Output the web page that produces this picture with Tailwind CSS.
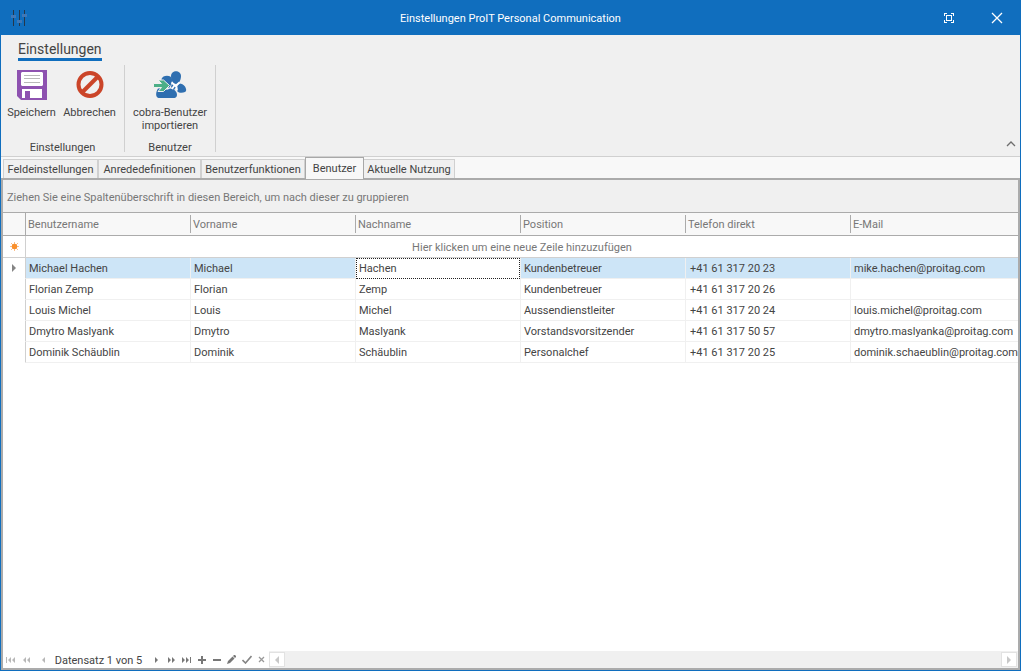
<!DOCTYPE html>
<html lang="de">
<head>
<meta charset="utf-8">
<title>Einstellungen ProIT Personal Communication</title>
<script src="https://cdn.jsdelivr.net/npm/@tailwindcss/browser@4"></script>
</head>
<body class="flex h-screen flex-col overflow-hidden border border-t-0 border-[#106ebe] bg-white font-['Roboto','DejaVu_Sans_Condensed',sans-serif] text-[11px] leading-[13px] text-[#444444]">
  <header class="grid h-[35px] shrink-0 grid-cols-[1fr_auto_1fr] items-center bg-[#106ebe] text-white">
    <svg class="ml-[10px] h-[18px] w-[17px]" viewBox="0 0 17 18" aria-hidden="true">
      <path d="M2.500 1v16M8.500 1v16M13.500 1v16" stroke="#26374a" stroke-width="1" fill="none"/>
      <path d="M0 6h5v3H0zM6 11h5v3H6zM11 5h5v3h-5z" fill="#3f78b8"/>
    </svg>
    <h1 class="pt-px">Einstellungen ProIT Personal Communication</h1>
    <div class="flex items-center justify-end gap-9 pr-[17px]">
      <button type="button" aria-label="Vollbild" class="flex">
        <svg class="h-3 w-3" viewBox="0 0 12 12" fill="none" stroke="#ffffff" shape-rendering="crispEdges"><path d="M1.500 4V1.500H4M8 1.500h2.500V4M10.500 8v2.500H8M4 10.500H1.500V8M3.500 3.500h5v5h-5z"/></svg>
      </button>
      <button type="button" aria-label="Schliessen" class="flex">
        <svg class="h-3 w-3" viewBox="0 0 12 12" fill="none" stroke="#ffffff" stroke-width="1.300"><path d="M1 1l10 10M11 1L1 11"/></svg>
      </button>
    </div>
  </header>

  <section class="shrink-0 border-b border-[#d0d0d0] bg-[#f0f0f0]" aria-label="Menüband">
    <div class="flex h-[30px] items-start pt-[6px] pl-[17px]">
      <button type="button" class="border-b-[3px] border-[#106ebe] text-[14px] leading-[17px]">Einstellungen</button>
    </div>
    <div class="flex h-[91px] items-start">
      <div class="flex h-[87px] w-[124px] flex-col justify-between border-r border-[#d0d0d0]">
        <div class="flex">
          <button type="button" class="flex w-[61px] flex-col items-center gap-[6px] pt-[5px]">
            <svg class="h-[30px] w-[30px]" viewBox="0 0 30 30" aria-hidden="true">
              <path d="M0 0h30v30H4l-4-4z" fill="#8e52b0"/>
              <path d="M5 2h20l1 1v12l-1 1H5l-1-1V3zM5 19h20v9H5z" fill="#ffffff"/>
              <path d="M7 5.500h16M7 8.500h16M7 12.500h16" stroke="#b9b9b9"/>
              <path d="M8 21h5v7H8z" fill="#8e52b0"/>
            </svg>
            <span>Speichern</span>
          </button>
          <button type="button" class="flex w-[55px] flex-col items-center gap-[6px] pt-[5px]">
            <svg class="h-[30px] w-[30px]" viewBox="0 0 30 30" fill="none" stroke="#cb4529" stroke-width="4" aria-hidden="true"><circle cx="15" cy="14.500" r="11.500"/><path d="M23 6.500L7 22.500"/></svg>
            <span>Abbrechen</span>
          </button>
        </div>
        <p class="text-center leading-[9px]">Einstellungen</p>
      </div>
      <div class="flex h-[87px] w-[91px] flex-col justify-between border-r border-[#d0d0d0]">
        <button type="button" class="flex flex-col items-center gap-[6px] pt-[5px]">
          <svg class="h-[30px] w-[34px]" viewBox="0 0 34 30" aria-hidden="true">
            <g fill="#2f6fb0">
              <path d="M18 6c0-6.500 10-6.500 10 0 0 3-1 5-2.500 7-1.500 1.500-3.500 1-5 0C18.500 11 18 9 18 6z"/>
              <path d="M26.500 13.500c2 0 4 1 5.500 3 1 2 2 4 0 5.500-2 1-6 1.500-8-1-1-2.500 0-6 2.500-7.500z"/>
              <path d="M8.500 9c1-4.500 10-4.500 10.500 0 .3 3-1 6-2.500 8.500h-6C9 15 8 12 8.500 9z"/>
              <path d="M5 18.500h6c2 1.500 4 1.500 6 0 3 0 5 1.500 6.500 4 1 2.500.5 5-2 5.500h-16c-3-.5-3-6-.5-9.500z"/>
              <path d="M19 13l4 4-2 3-3-3z"/>
            </g>
            <path d="M18.500 12.500l4 3.500 4-3.500M21 16l-2 3M23.500 16.500l.5 4" fill="none" stroke="#ffffff" stroke-width="1.800"/>
            <path d="M.5 13.500h8L5 10h5.500l6 5.500-6 6H5l3.500-4h-8z" fill="#4caf87" stroke="#f0f0f0" stroke-width="1"/>
          </svg>
          <span>cobra-Benutzer<br>importieren</span>
        </button>
        <p class="text-center leading-[9px]">Benutzer</p>
      </div>
      <button type="button" aria-label="Menüband minimieren" class="mr-1 mb-[9px] ml-auto self-end">
        <svg class="h-[7px] w-[10px]" viewBox="0 0 10 7" fill="none" stroke="#6e6e6e" stroke-width="1.300"><path d="M1 6l4-4 4 4"/></svg>
      </button>
    </div>
  </section>

  <nav class="flex h-[21px] shrink-0 items-end bg-[#f8f8f8] pl-[2px]" role="tablist">
    <button type="button" role="tab" class="h-[19px] w-[95px] border border-b-0 border-[#d0d0d0] bg-[#f0f0f0]">Feldeinstellungen</button>
    <button type="button" role="tab" class="h-[19px] w-[103px] border border-b-0 border-[#d0d0d0] bg-[#f0f0f0]">Anrededefinitionen</button>
    <button type="button" role="tab" class="h-[19px] w-[104px] border border-b-0 border-[#d0d0d0] bg-[#f0f0f0]">Benutzerfunktionen</button>
    <button type="button" role="tab" aria-selected="true" class="z-10 -mb-px h-[22px] w-[59px] border border-b-0 border-[#a8a8a8] bg-[#f8f8f8]">Benutzer</button>
    <button type="button" role="tab" class="h-[19px] w-[91px] border border-b-0 border-l-0 border-[#d0d0d0] bg-[#f0f0f0]">Aktuelle Nutzung</button>
  </nav>

  <main class="flex min-h-0 flex-1 flex-col border-2 border-[#ababab]">
    <p class="flex h-8 shrink-0 items-center bg-[#f0f0f0] pt-[2px] pl-1 text-[#777777]">Ziehen Sie eine Spaltenüberschrift in diesen Bereich, um nach dieser zu gruppieren</p>
    <div class="min-h-0 flex-1 overflow-hidden">
      <table class="w-full table-fixed border-separate border-spacing-0 text-left whitespace-nowrap">
        <colgroup><col class="w-[23px]"><col class="w-[165px]"><col class="w-[165px]"><col class="w-[165px]"><col class="w-[165px]"><col class="w-[165px]"><col></colgroup>
        <thead>
          <tr class="h-6 bg-[#f8f8f8] text-[#777777] [&>th]:border-y [&>th]:border-[#ababab] [&>th]:p-0 [&>th]:font-normal">
            <th class="border-r" aria-label="Zeilenstatus"></th>
            <th><div class="flex h-[18px] items-center border-r border-[#ababab] pl-[2px]">Benutzername</div></th>
            <th><div class="flex h-[18px] items-center border-r border-[#ababab] pl-[2px]">Vorname</div></th>
            <th><div class="flex h-[18px] items-center border-r border-[#ababab] pl-[2px]">Nachname</div></th>
            <th><div class="flex h-[18px] items-center border-r border-[#ababab] pl-[2px]">Position</div></th>
            <th><div class="flex h-[18px] items-center border-r border-[#ababab] pl-[2px]">Telefon direkt</div></th>
            <th><div class="flex h-[18px] items-center pl-[2px]">E-Mail</div></th>
          </tr>
        </thead>
        <tbody class="[&_td]:border-b [&_td]:p-0">
          <tr class="h-[22px]">
            <td class="border-r border-[#d0d0d0]">
              <svg class="mx-auto h-[9px] w-[9px]" viewBox="0 0 9 9" aria-label="Neue Zeile"><path d="M4.500 0v9M0 4.500h9M1 1l7 7M8 1L1 8" stroke="#fbc08a" stroke-width="1"/><circle cx="4.500" cy="4.500" r="2.700" fill="#f9902c"/></svg>
            </td>
            <td colspan="6" class="border-[#d0d0d0] pt-px! text-center text-[#777777]">Hier klicken um eine neue Zeile hinzuzufügen</td>
          </tr>
          <tr class="h-[21px] bg-[#cde5f7] [&>td]:border-[#f0f0f0] [&>td]:pl-[3px] [&>td:not(:last-child)]:border-r">
            <td class="border-r-[#d0d0d0]! border-b-white! bg-white pl-0!"><svg class="mx-auto h-2 w-1" viewBox="0 0 4 8" aria-label="Aktuelle Zeile"><path d="M0 0l4 4-4 4z" fill="#858585"/></svg></td>
            <td>Michael Hachen</td><td>Michael</td>
            <td class="border-b-0! bg-white pl-0!"><div class="flex h-[21px] items-center border border-dotted border-[#222222] pl-[2px]">Hachen</div></td>
            <td>Kundenbetreuer</td><td class="pl-1!">+41 61 317 20 23</td><td>mike.hachen@proitag.com</td>
          </tr>
          <tr class="h-[21px] [&>td]:border-[#f0f0f0] [&>td]:pl-[3px] [&>td:not(:last-child)]:border-r">
            <td class="border-r-[#d0d0d0]! border-b-white!"></td><td>Florian Zemp</td><td>Florian</td><td>Zemp</td><td>Kundenbetreuer</td><td class="pl-1!">+41 61 317 20 26</td><td></td>
          </tr>
          <tr class="h-[21px] [&>td]:border-[#f0f0f0] [&>td]:pl-[3px] [&>td:not(:last-child)]:border-r">
            <td class="border-r-[#d0d0d0]! border-b-white!"></td><td>Louis Michel</td><td>Louis</td><td>Michel</td><td>Aussendienstleiter</td><td class="pl-1!">+41 61 317 20 24</td><td>louis.michel@proitag.com</td>
          </tr>
          <tr class="h-[21px] [&>td]:border-[#f0f0f0] [&>td]:pl-[3px] [&>td:not(:last-child)]:border-r">
            <td class="border-r-[#d0d0d0]! border-b-white!"></td><td>Dmytro Maslyank</td><td>Dmytro</td><td>Maslyank</td><td>Vorstandsvorsitzender</td><td class="pl-1!">+41 61 317 50 57</td><td>dmytro.maslyanka@proitag.com</td>
          </tr>
          <tr class="h-[21px] [&>td]:border-[#f0f0f0] [&>td]:pl-[3px] [&>td:not(:last-child)]:border-r">
            <td class="border-r-[#d0d0d0]! border-b-white!"></td><td>Dominik Schäublin</td><td>Dominik</td><td>Schäublin</td><td>Personalchef</td><td class="pl-1!">+41 61 317 20 25</td><td>dominik.schaeublin@proitag.com</td>
          </tr>
        </tbody>
      </table>
    </div>

    <footer class="flex h-[17px] shrink-0 items-stretch">
      <div class="flex w-[266px] shrink-0 items-center [&>button]:flex [&>button]:w-[15px] [&>button]:justify-center">
        <button type="button" aria-label="Erster Datensatz"><svg class="h-2 w-[10px]" viewBox="0 0 10 8" fill="#b8b8b8"><path d="M0 1h1v6H0zM5 1v6L2 4zM9 1v6L6 4z"/></svg></button>
        <button type="button" aria-label="Vorherige Seite"><svg class="h-2 w-2" viewBox="0 0 8 8" fill="#b8b8b8"><path d="M4 1v6L1 4zM8 1v6L5 4z"/></svg></button>
        <button type="button" aria-label="Vorheriger Datensatz"><svg class="ml-1 h-2 w-1" viewBox="0 0 4 8" fill="#b8b8b8"><path d="M4 1v6L1 4z"/></svg></button>
        <span class="w-[101px] pt-px text-center">Datensatz 1 von 5</span>
        <button type="button" aria-label="Nächster Datensatz"><svg class="h-2 w-1" viewBox="0 0 4 8" fill="#777777"><path d="M0 1v6l3-3z"/></svg></button>
        <button type="button" aria-label="Nächste Seite"><svg class="h-2 w-2" viewBox="0 0 8 8" fill="#777777"><path d="M0 1v6l3-3zM4 1v6l3-3z"/></svg></button>
        <button type="button" aria-label="Letzter Datensatz"><svg class="h-2 w-[10px]" viewBox="0 0 10 8" fill="#777777"><path d="M0 1v6l3-3zM4 1v6l3-3zM8 1h1v6H8z"/></svg></button>
        <button type="button" aria-label="Hinzufügen"><svg class="h-2 w-2" viewBox="0 0 8 8" fill="#777777"><path d="M3 0h2v3h3v2H5v3H3V5H0V3h3z"/></svg></button>
        <button type="button" aria-label="Löschen"><svg class="h-2 w-2" viewBox="0 0 8 8" fill="#777777"><path d="M0 3h8v2H0z"/></svg></button>
        <button type="button" aria-label="Bearbeiten"><svg class="h-[9px] w-[9px]" viewBox="0 0 9 9" fill="#777777"><path d="M0 9l1-3 4.500-4.500 2 2L3 8zM6 1l1-1h1l1 1v1L8 3z"/></svg></button>
        <button type="button" aria-label="Bestätigen"><svg class="h-[9px] w-[10px]" viewBox="0 0 10 9" fill="none" stroke="#858585" stroke-width="1.600"><path d="M0.500 5l3 3 6-7"/></svg></button>
        <button type="button" aria-label="Verwerfen"><svg class="h-[7px] w-[7px]" viewBox="0 0 7 7" fill="none" stroke="#999999" stroke-width="1.300"><path d="M1 1l5 5M6 1L1 6"/></svg></button>
      </div>
      <div class="flex flex-1 items-center justify-between bg-[#f0f0f0] pr-[1px]">
        <button type="button" aria-label="Nach links" class="flex h-[15px] w-4 items-center justify-center border border-[#e2e2e2] bg-white"><svg class="h-2 w-1" viewBox="0 0 4 8" fill="#c8c8c8"><path d="M4 0v8L0 4z"/></svg></button>
        <button type="button" aria-label="Nach rechts" class="flex h-[15px] w-4 items-center justify-center border border-[#e2e2e2] bg-white"><svg class="h-2 w-1" viewBox="0 0 4 8" fill="#c8c8c8"><path d="M0 0v8l4-4z"/></svg></button>
      </div>
    </footer>
  </main>
</body>
</html>
